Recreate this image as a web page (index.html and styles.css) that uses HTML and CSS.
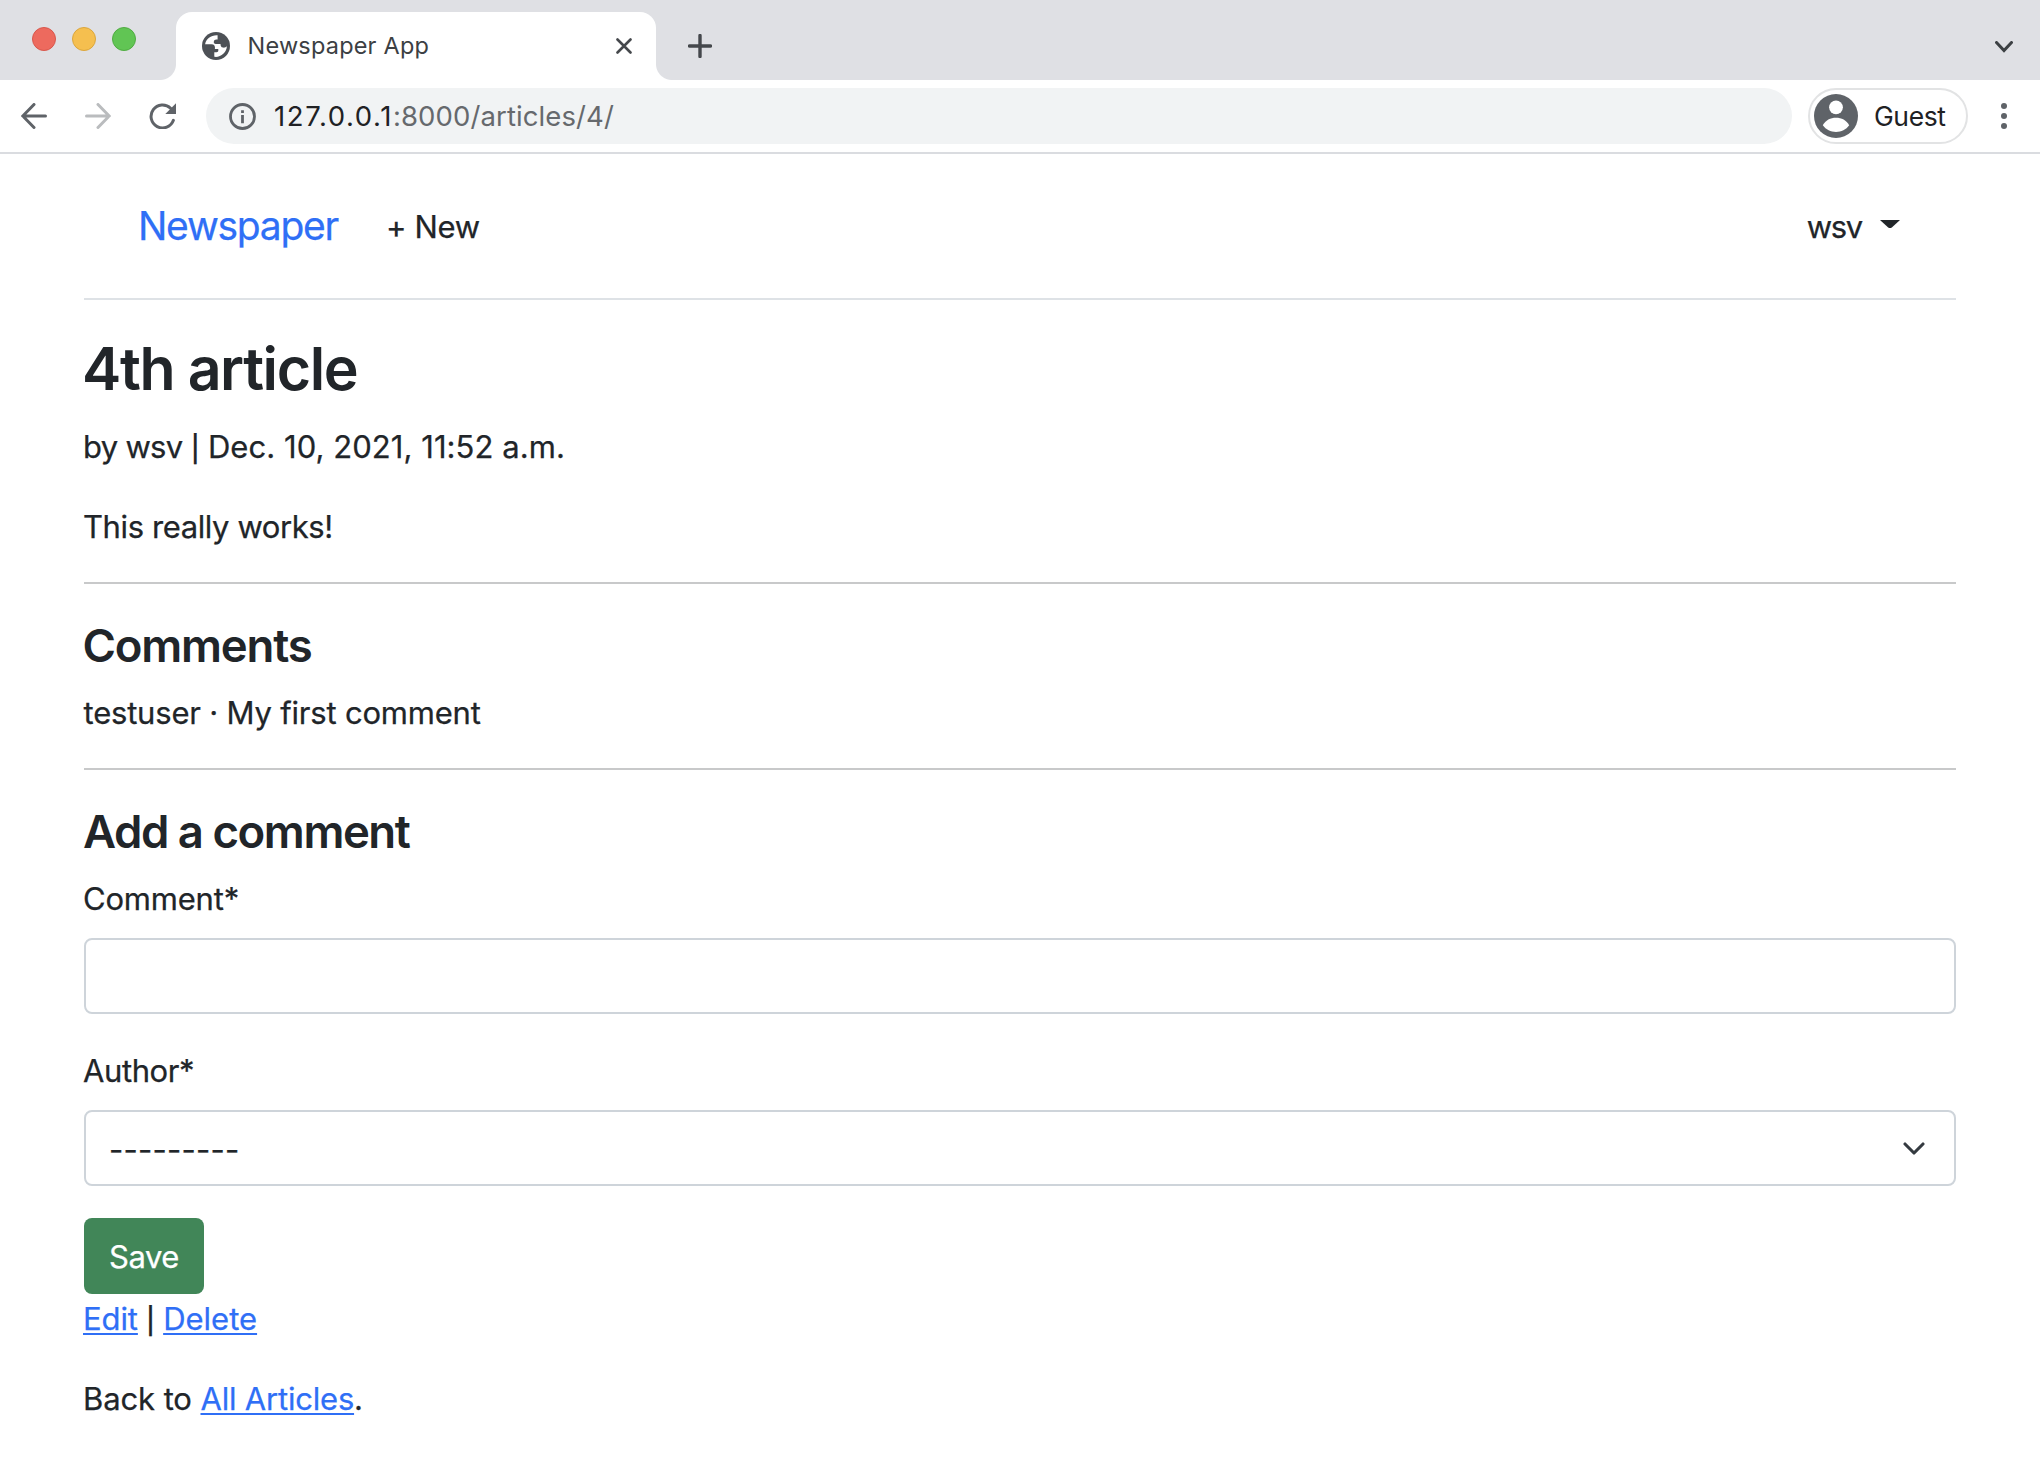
FILE: index.html
```html
<!DOCTYPE html>
<html lang="en">
<head>
<meta charset="utf-8">
<title>Newspaper App</title>
<link rel="stylesheet" href="styles.css">
</head>
<body>
<header class="tabstrip">
  <div class="lights"><i class="light red"></i><i class="light amber"></i><i class="light green"></i></div>
  <div class="tab">
    <svg class="globe" width="28" height="28" viewBox="0 0 28 28"><circle cx="14" cy="14" r="14" fill="#4d5156"/><path fill="#fff" d="M15.600 3.200C9.200 2.800 4.200 6.600 3.100 12.200H9.500C12.300 12.200 13.300 14.100 12.900 17H16.300V18.800C16.300 19.700 15.600 20.200 14.600 20.200H12.300V24.800C18.700 25.600 24.500 21 24.900 14.300C24 15.200 22.600 15.800 21.100 15.600C18.900 15.400 18.600 13.700 18.500 12H13.700C12.300 12 11.600 11.100 11.800 9.800C12 8.400 12.900 7.600 14.300 7.600H15.600Z"/></svg>
    <span class="tab-title">Newspaper App</span>
    <svg class="tab-close" width="16" height="16" viewBox="0 0 16 16"><path d="M1.500 1.500l13 13M14.500 1.500l-13 13" stroke="#45484c" stroke-width="2.600" stroke-linecap="round"/></svg>
  </div>
  <svg class="new-tab" width="24" height="24" viewBox="0 0 24 24"><path d="M12 1.500v21M1.500 12h21" stroke="#45484c" stroke-width="3.400" stroke-linecap="round"/></svg>
  <svg class="tab-search" width="18" height="12" viewBox="0 0 18 12"><path d="M1.500 1.500L9 9.500l7.500-8" fill="none" stroke="#3c4043" stroke-width="3" stroke-linecap="round"/></svg>
</header>
<div class="toolbar">
  <div class="nav-buttons">
    <svg width="26" height="26" viewBox="0 0 26 26" fill="none" stroke="#5f6368" stroke-width="3" stroke-linecap="round"><path d="M24.500 13H2M13 1.500L1.800 13 13 24.500"/></svg>
    <svg width="26" height="26" viewBox="0 0 26 26" fill="none" stroke="#babcbe" stroke-width="3" stroke-linecap="round"><path d="M1.500 13H24M13 1.500L24.200 13 13 24.500"/></svg>
    <svg width="28" height="26" viewBox="0 0 28 26"><path d="M24.400 17.300A11.500 11.500 0 1 1 21.600 5.200" fill="none" stroke="#5f6368" stroke-width="3" stroke-linecap="round"/><path d="M27 .3V11H16.300z" fill="#5f6368"/></svg>
  </div>
  <div class="omnibox">
    <svg width="27" height="27" viewBox="0 0 27 27"><circle cx="13.500" cy="13.500" r="12" fill="none" stroke="#5f6368" stroke-width="2.800"/><path d="M12.100 12h2.800v8.200h-2.800zM12.100 7.300h2.800v2.800h-2.800z" fill="#5f6368"/></svg>
    <span class="url"><span class="host">127.0.0.1</span>:8000/articles/4/</span>
  </div>
  <div class="profile">
    <svg width="44" height="44" viewBox="0 0 44 44"><circle cx="22" cy="22" r="22" fill="#5f6368"/><circle cx="22" cy="13.300" r="6.900" fill="#fff"/><path d="M8.800 31.300C11.500 26.200 16.500 23.800 22 23.800S32.500 26.200 35.200 31.300C32 35.800 27.300 38 22 38S12 35.800 8.800 31.300z" fill="#fff"/></svg>
    <span>Guest</span>
  </div>
  <div class="menu"><i></i><i></i><i></i></div>
</div>
<main class="page">
  <nav class="site-nav">
    <a class="brand">Newspaper</a>
    <a class="new-link">+ New</a>
    <a class="user">wsv</a>
    <svg width="20" height="8" viewBox="0 0 20 8"><path d="M0 0h20l-8.200 7.400q-1.800 1.200-3.600 0z" fill="#212529"/></svg>
  </nav>
  <h1>4th article</h1>
  <p class="byline"><span class="author">by wsv</span> <span class="bar">|</span> Dec. 10, 2021, 11:52 a.m.</p>
  <p class="article-body">This really works!</p>
  <hr>
  <h3 class="comments-title">Comments</h3>
  <p class="comment">testuser · My first comment</p>
  <hr>
  <h3 class="add-title">Add a comment</h3>
  <form class="comment-form">
    <label class="comment-label">Comment*</label>
    <div class="control"></div>
    <label class="author-label">Author*</label>
    <div class="control select">
      <span>---------</span>
      <svg width="22" height="14" viewBox="0 0 22 14"><path d="M2 2l9 9 9-9" fill="none" stroke="#343a40" stroke-width="3.100" stroke-linecap="round" stroke-linejoin="round"/></svg>
    </div>
    <button class="save" type="button">Save</button>
  </form>
  <p class="actions"><a class="edit">Edit</a> <span class="bar">|</span> <a class="delete">Delete</a></p>
  <p class="back">Back to <a class="all">All Articles</a>.</p>
</main>
</body>
</html>
```
FILE: styles.css
```css
* { box-sizing: border-box; }
body {
  margin: 0;
  background: #fff;
  color: #212529;
  font: 400 31px/48px Inter, "Liberation Sans", sans-serif;
}
svg { display: block; flex: none; }
p, h1, h3 { margin: 0; }

/* Browser frame */
.tabstrip {
  height: 80px;
  display: flex;
  align-items: flex-start;
  background: #dfe0e4;
}
.lights { display: flex; gap: 16px; padding: 27px 0 0 32px; width: 176px; }
.light { width: 24px; height: 24px; border-radius: 50%; border: 1px solid; }
.red { background: #ed6a5e; border-color: #d8574c; }
.amber { background: #f5bf4f; border-color: #dba63c; }
.green { background: #61c554; border-color: #50ac42; }
.tab {
  position: relative;
  width: 480px;
  height: 68px;
  margin-top: 12px;
  padding: 0 24px 0 26px;
  display: flex;
  align-items: center;
  background: #fff;
  border-radius: 16px 16px 0 0;
}
.tab::before, .tab::after {
  content: "";
  position: absolute;
  bottom: 0;
  width: 16px;
  height: 16px;
}
.tab::before { left: -16px; background: radial-gradient(circle at 0 0, transparent 15.5px, #fff 16.5px); }
.tab::after { right: -16px; background: radial-gradient(circle at 100% 0, transparent 15.5px, #fff 16.5px); }
.tab-title {
  margin-left: 17.5px;
  color: #3c4043;
  font-size: 23.5px;
  letter-spacing: .2px;
}
.tab-close { margin-left: auto; }
.new-tab { margin: 34px 0 0 32px; }
.tab-search { margin: 41px 27px 0 auto; }

.toolbar {
  height: 74px;
  padding: 8px 31px 8px 21px;
  display: flex;
  align-items: center;
  border-bottom: 2px solid #dadce0;
}
.nav-buttons { width: 185px; display: flex; gap: 38px; }
.omnibox {
  width: 1586px;
  height: 56px;
  padding-left: 23px;
  display: flex;
  align-items: center;
  gap: 18px;
  border-radius: 28px;
  background: #f1f3f4;
}
.url { color: #66696d; font-size: 27.5px; letter-spacing: .1px; }
.host { color: #202124; letter-spacing: 1.6px; }
.profile {
  width: 160px;
  height: 56px;
  margin-left: 16px;
  padding-left: 4px;
  display: flex;
  align-items: center;
  gap: 16px;
  border: 2px solid #e2e3e4;
  border-radius: 28px;
  color: #202124;
  font-size: 26.5px;
  letter-spacing: -.4px;
}
.menu { margin-left: auto; display: flex; flex-direction: column; gap: 4px; padding-right: 2px; }
.menu i { width: 6px; height: 6px; border-radius: 50%; background: #5f6368; }

/* Article page */
.page { padding: 0 84px; -webkit-text-stroke: .25px; }
.site-nav {
  height: 146px;
  padding: 0 56px 0 54px;
  display: flex;
  align-items: center;
  border-bottom: 2px solid #dee2e6;
}
.brand { color: #2f6ff6; font-size: 39px; line-height: 60px; letter-spacing: -1.27px; }
.new-link { margin: 2px 0 0 48px; letter-spacing: -.35px; }
.user { margin: 2px 18px 0 auto; letter-spacing: -1.3px; }
.site-nav svg { margin-top: -4px; }
h1, h3 { font-weight: 600; -webkit-text-stroke: 0; }
h1 { margin: 35px 0 20px; font-size: 59px; line-height: 68px; letter-spacing: -1.4px; text-indent: -2px; }
.byline { text-indent: -1px; letter-spacing: .06px; }
.author { letter-spacing: -.7px; }
.bar { font-size: 26px; line-height: 1; font-weight: 500; margin: 0 -.6px; }
.article-body { margin-top: 32px; letter-spacing: -.4px; text-indent: -1px; }
hr { height: 2px; margin: 31px 0 33px; border: 0; background: #c8c9ca; }
h3 { font-size: 45.5px; line-height: 58px; }
.comments-title { letter-spacing: -1.2px; text-indent: -1.5px; }
.comment { margin: 14px 0 31px; letter-spacing: -.2px; text-indent: -.5px; }
.add-title { letter-spacing: -1.45px; text-indent: -1px; }
.comment-form { display: flex; flex-direction: column; align-items: stretch; margin-top: 14px; }
.comment-label { letter-spacing: -.2px; text-indent: -1px; }
.author-label { margin-top: 33px; letter-spacing: -.4px; text-indent: -1px; }
.control {
  height: 76px;
  margin-top: 15px;
  border: 2px solid #ced4da;
  border-radius: 8px;
}
.select {
  display: flex;
  align-items: center;
  justify-content: space-between;
  padding: 0 29px 0 23px;
  letter-spacing: .25px;
}
.select span { padding-top: 3px; }
.select svg { margin-top: 1px; }
.save {
  width: 120px;
  height: 76px;
  margin-top: 32px;
  padding: 1px 0 0;
  border: 0;
  border-radius: 8px;
  background: #418658;
  color: #fff;
  font: inherit;
  letter-spacing: -.45px;
}
.actions { margin-top: 1px; text-indent: -1px; }
.back { margin-top: 32px; text-indent: -1px; letter-spacing: -.1px; }
.actions a, .back a {
  color: #2f6ff6;
  text-decoration: underline;
  text-decoration-thickness: 2px;
  text-underline-offset: 3px;
}
.edit { letter-spacing: -.1px; }
.delete { letter-spacing: 0; }
.back .all { letter-spacing: -.2px; }
```
